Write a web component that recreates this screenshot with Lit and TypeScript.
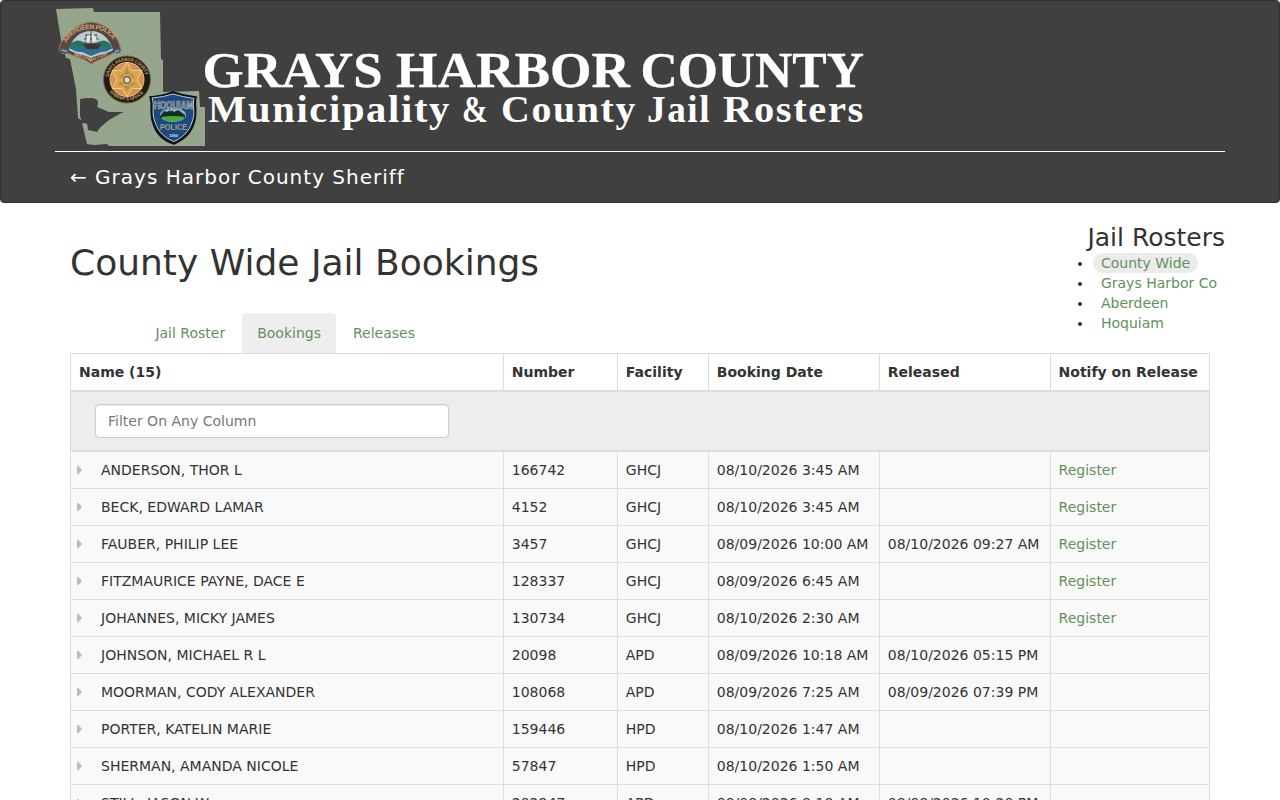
import { LitElement, html, css, svg } from "lit";
import { customElement } from "lit/decorators.js";

interface Booking {
  name: string;
  num: string;
  facility: string;
  booked: string;
  released?: string;
  notify?: boolean;
}

const BOOKINGS: Booking[] = [
  { name: "ANDERSON, THOR L", num: "166742", facility: "GHCJ", booked: "08/10/2026 3:45 AM", notify: true },
  { name: "BECK, EDWARD LAMAR", num: "4152", facility: "GHCJ", booked: "08/10/2026 3:45 AM", notify: true },
  { name: "FAUBER, PHILIP LEE", num: "3457", facility: "GHCJ", booked: "08/09/2026 10:00 AM", released: "08/10/2026 09:27 AM", notify: true },
  { name: "FITZMAURICE PAYNE, DACE E", num: "128337", facility: "GHCJ", booked: "08/09/2026 6:45 AM", notify: true },
  { name: "JOHANNES, MICKY JAMES", num: "130734", facility: "GHCJ", booked: "08/10/2026 2:30 AM", notify: true },
  { name: "JOHNSON, MICHAEL R L", num: "20098", facility: "APD", booked: "08/09/2026 10:18 AM", released: "08/10/2026 05:15 PM" },
  { name: "MOORMAN, CODY ALEXANDER", num: "108068", facility: "APD", booked: "08/09/2026 7:25 AM", released: "08/09/2026 07:39 PM" },
  { name: "PORTER, KATELIN MARIE", num: "159446", facility: "HPD", booked: "08/10/2026 1:47 AM" },
  { name: "SHERMAN, AMANDA NICOLE", num: "57847", facility: "HPD", booked: "08/10/2026 1:50 AM" },
  { name: "STILL, JASON W", num: "202947", facility: "APD", booked: "08/08/2026 8:18 AM", released: "08/08/2026 10:20 PM" },
];

interface Word {
  text: string;
  x: number;
  width: number;
}

const COUNTY_WORDS: Word[] = [
  { text: "GRAYS", x: 202.5, width: 180 },
  { text: "HARBOR", x: 396, width: 234 },
  { text: "COUNTY", x: 640.5, width: 223.5 },
];

const ROSTER_WORDS: Word[] = [
  { text: "Municipality", x: 208, width: 243 },
  { text: "&", x: 462, width: 27 },
  { text: "County", x: 501, width: 136 },
  { text: "Jail", x: 647, width: 64 },
  { text: "Rosters", x: 723, width: 142 },
];

const words = (list: Word[], y: number, cls: string) =>
  list.map(
    (w) => svg`<text class="title ${cls}" x=${w.x} y=${y} textLength=${w.width} lengthAdjust="spacingAndGlyphs">${w.text}</text>`
  );

const aberdeenBadge = svg`
  <path d="M59 48 C64 34 76 24 91 22 C108 24 118 35 121 50 C121 53 118 54 115 52 C108 57 98 59 91 64 C84 58 75 57 67 53 C63 55 60 53 59 48Z" fill="#55493f" stroke="#a07c62" stroke-width="1"/>
  <path d="M69 50 C71 39 80 31 91 31 C102 31 110 39 113 50 C106 55 98 54 91 58 C84 54 76 55 69 50Z" fill="#bccbd2"/>
  <path d="M70 44 Q77 38 83 42 L88 43 L96 43 Q105 37 111 45 L112 49 L70 49Z" fill="#27745a"/>
  <path d="M70 47 L112 47 Q110 52 101 52 L91 56 L82 52 Q72 52 70 47Z" fill="#276f94"/>
  <path d="M83 44 L101 44 L98 49 L87 49Z" fill="#3f3432"/>
  <path d="M91 30 V45 M86 34 V45 M96 34 V45 M84 39 H99 M86 35 H97" stroke="#514c4c" stroke-width="1"/>
  <path d="M87 36 L90 35 V41 L86 42Z M92 33 L96 37 L97 42 L92 41Z" fill="#e6e4df"/>
  <path d="M60 48 L69 50 L67 54 L61 52Z M113 50 L120 48 L120 52 L115 53Z" fill="#3f5b8a"/>
  <path d="M62 50 L67 51.500 M115 51.500 L119 50.500" stroke="#c4c9d2" stroke-width="1"/>
  <path id="abTop" d="M66.500 43 C70 34 79 29 91 29 C103 29 111 34 115.500 44" fill="none"/>
  <path id="abBottom" d="M74 56 Q83 57 91 62 Q99 57 110 54.500" fill="none"/>
  <text class="badge" font-size="6.500" fill="#d9a474"><textPath href="#abTop" textLength="56" lengthAdjust="spacing">ABERDEEN POLICE</textPath></text>
  <text class="badge" font-size="5" fill="#d9a474"><textPath href="#abBottom" textLength="36" lengthAdjust="spacing">WASHINGTON</textPath></text>
`;

const sheriffBadge = svg`
  <circle cx="127" cy="79.500" r="23.500" fill="#1e1b15" stroke="#776044" stroke-width="1"/>
  <circle cx="127" cy="79.500" r="17" fill="#d3935a" stroke="#eac477" stroke-width="1"/>
  <path d="M127 62.500 L132 70.500 L142 70.500 L137 79.500 L142 88.500 L132 88.500 L127 96.500 L122 88.500 L112 88.500 L117 79.500 L112 70.500 L122 70.500Z" fill="#d9a24e" stroke="#efd07c" stroke-width="1"/>
  <path d="M127 67 L129 73 L134 76 L132 82 L136 84 L130 86 L127 91 L124 86 L118 84 L122 81 L120 76 L125 73Z" fill="#b58c42"/>
  <circle cx="127" cy="80" r="5" fill="#94683a" stroke="#efd38c" stroke-width="1"/>
  <circle cx="127" cy="80" r="2.500" fill="#d8dccb"/>
  <path id="shTop" d="M108.500 77 A18.700 18.700 0 0 1 145.500 77" fill="none"/>
  <path id="shBottom" d="M109 91 A21.800 21.800 0 0 0 145 91" fill="none"/>
  <text class="badge" font-size="4.800" fill="#c9a06c"><textPath href="#shTop" textLength="51" lengthAdjust="spacingAndGlyphs">GRAYS HARBOR COUNTY</textPath></text>
  <text class="badge" font-size="4.500" fill="#c9a06c"><textPath href="#shBottom" startOffset="1" textLength="39" lengthAdjust="spacingAndGlyphs">SHERIFF'S OFFICE</textPath></text>
`;

const hoquiamBadge = svg`
  <path d="M150 97 Q163 96 173 92 Q184 96 196 97 C194 105 198 113 194 123 C191 134 182 141 174 144 C164 141 156 134 153 123 C149 112 153 105 150 97Z" fill="#101820" stroke="#0c1117" stroke-width="1.500"/>
  <path d="M152 98 Q164 97 173 94 Q183 97 194 98.500 C192 106 196 113 192 122 C189 132 182 138 174 141.500 C165 138 158 132 155 122 C151 112 155 105 152 98Z" fill="#1b4a80" stroke="#c3ccd2" stroke-width="1"/>
  <ellipse cx="173" cy="115" rx="13" ry="7" fill="#8fb0c4"/>
  <path d="M160 116 L164 111 L167 112 L171 109.500 L174 112 L178 110 L185 115 L185 118 L160 118Z" fill="#152d27"/>
  <path d="M161 117 Q173 115 185 117 Q183 120 176 121.500 Q165 122 161 117Z" fill="#48a83a"/>
  <text class="badge" x="154" y="108.500" font-size="10" textLength="39" lengthAdjust="spacingAndGlyphs" fill="#2d3a48" stroke="#b3bcc0" stroke-width=".7">HOQUIAM</text>
  <text class="badge" x="160" y="130" font-size="8.500" textLength="27" lengthAdjust="spacingAndGlyphs" fill="#d0cdbf" stroke="#1c2c3c" stroke-width=".3">POLICE</text>
  <text class="badge" x="169" y="137" font-size="4" textLength="9" lengthAdjust="spacingAndGlyphs" fill="#cddde5">1890</text>
`;

@customElement("app-root")
export class AppRoot extends LitElement {
  static styles = css`
    :host {
      display: block;
      height: 800px;
      overflow: hidden;
      background: #fff;
      color: #333;
      font: 14px/20px "DejaVu Sans", sans-serif;
    }
    * { box-sizing: border-box; }
    a { color: #62915c; text-decoration: none; }
    .navbar {
      height: 203px;
      padding: 0 54px;
      background: #404040;
      border: 1px solid #303030;
      border-radius: 4px;
    }
    .banner {
      height: 151px;
      border-bottom: 1px solid #fff;
    }
    .banner svg { display: block; }
    .title { font-family: "Liberation Serif", serif; font-weight: 700; fill: #fff; }
    .big { font-size: 51px; stroke: #fff; stroke-width: .3px; }
    .small { font-size: 37px; letter-spacing: 1.5px; }
    .badge { font-family: "Liberation Sans", sans-serif; font-weight: 700; }
    .back {
      display: block;
      padding: 15px;
      color: #fff;
      font-size: 20px;
      letter-spacing: 1px;
    }
    .container {
      display: flow-root;
      width: 1170px;
      margin: 20px auto 0;
      padding: 0 15px;
    }
    .top {
      display: flex;
      justify-content: space-between;
      height: 130px;
      margin-right: -15px;
    }
    .left { display: flex; flex-direction: column; }
    h1 {
      margin: 20px 0 30px;
      font-size: 36px;
      line-height: 40px;
      font-weight: 400;
    }
    .tabs { display: flex; gap: 2px; padding-left: 70.4px; }
    .tab { padding: 10px 15px; border-radius: 4px 4px 0 0; }
    .tab.active { background: #eee; }
    .rosters h2 {
      margin: 0;
      padding-bottom: 1px;
      font-size: 25px;
      line-height: 29px;
      font-weight: 400;
      text-align: right;
    }
    .rosters ul { margin: 0; padding: 0 0 0 10px; }
    .rosters li { margin: 0; }
    .pill { padding: 2px 8px; border-radius: 10px; }
    .pill.active { background: #ebebeb; }
    table {
      width: 1140px;
      table-layout: fixed;
      border-collapse: collapse;
      border: 1px solid #ddd;
    }
    th, td { height: 37px; padding: 8px 8px 8px 7.8px; border: 1px solid #ddd; text-align: left; white-space: nowrap; }
    th:first-child, td:first-child { padding-left: 8px; }
    th:last-child, td:last-child { padding-left: 7.6px; }
    th { border-bottom-width: 2px; }
    td { background: #f9f9f9; }
    .filter td.filter-cell { height: 60px; padding: 12px 24px; background: #ededed; border-bottom-width: 2px; }
    input {
      display: block;
      width: 354px;
      height: 34px;
      padding: 6px 12px;
      font: inherit;
      border: 1px solid #ccc;
      border-radius: 4px;
      box-shadow: inset 0 1px 1px rgba(0, 0, 0, .075);
      background: #fff;
    }
    input::placeholder { color: #777; opacity: 1; }
    .name { display: flex; align-items: center; gap: 19px; margin-left: -2px; }
    .name svg { display: block; }
  `;

  render() {
    return html`
      <header class="navbar">
        <div class="banner">
          <svg width="820" height="150" viewBox="55 1 820 150">
            <path d="M56 9 L93 8 L94 12 L160 12 L161 59 L163 60 L163 92 L199 91 L200 107 L205 107 L205 146 L109 146 L107 144 L94 145 L87 144 L82 123 L89 124 L89 130 L97 132 L103 123 L111 116 L124 112 L109 112 L97 107 L98 101 L93 98 L80 99 L81 120 L78 118 L76 89 L70 59 L66 58 L61 40Z" fill="#96a68d"/>
            <path d="M80 104 L84 98 L96 99 L98 104 L96 109 L109 113 L123 112 L109 120 L96 131 L88 130 L87 122 L80 117Z" fill="#404040"/>
            ${aberdeenBadge}${sheriffBadge}${hoquiamBadge}
            ${words(COUNTY_WORDS, 86.5, "big")}
            ${words(ROSTER_WORDS, 121.5, "small")}
          </svg>
        </div>
        <a class="back">← Grays Harbor County Sheriff</a>
      </header>
      <main class="container">
        <div class="top">
          <div class="left">
            <h1>County Wide Jail Bookings</h1>
            <nav class="tabs">
              <a class="tab">Jail Roster</a>
              <a class="tab active">Bookings</a>
              <a class="tab">Releases</a>
            </nav>
          </div>
          <aside class="rosters">
            <h2>Jail Rosters</h2>
            <ul>
              <li><a class="pill active">County Wide</a></li>
              <li><a class="pill">Grays Harbor Co</a></li>
              <li><a class="pill">Aberdeen</a></li>
              <li><a class="pill">Hoquiam</a></li>
            </ul>
          </aside>
        </div>
        <table>
          <colgroup>
            <col style="width:433px"><col style="width:114px"><col style="width:91px"><col style="width:171px"><col style="width:171px"><col style="width:159px">
          </colgroup>
          <thead>
            <tr>
              <th>Name (15)</th><th>Number</th><th>Facility</th><th>Booking Date</th><th>Released</th><th>Notify on Release</th>
            </tr>
          </thead>
          <tbody>
            <tr class="filter"><td class="filter-cell" colspan="6"><input placeholder="Filter On Any Column"></td></tr>
            ${BOOKINGS.map(
              (b) => html`<tr>
                <td>
                  <div class="name">
                    <svg width="5" height="8" viewBox="0 0 5 8"><path d="M0 0h1.500L5 4 1.500 8H0z" fill="#bbb"/></svg>
                    <span>${b.name}</span>
                  </div>
                </td>
                <td>${b.num}</td>
                <td>${b.facility}</td>
                <td>${b.booked}</td>
                <td>${b.released ?? ""}</td>
                <td>${b.notify ? html`<a>Register</a>` : ""}</td>
              </tr>`
            )}
          </tbody>
        </table>
      </main>
    `;
  }
}
